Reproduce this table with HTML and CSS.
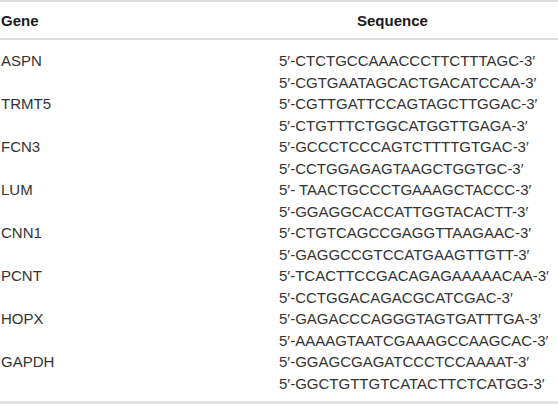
FILE: index.html
```html
<!DOCTYPE html>
<html>
<head>
<meta charset="utf-8">
<link rel="stylesheet" href="styles.css">
</head>
<body>
<div class="table">
  <div class="head">
    <div class="hcell gene-h">Gene</div>
    <div class="hcell seq-h">Sequence</div>
  </div>
  <div class="body">
    <div class="gene">ASPN</div>
    <div class="seq"><div>5′-CTCTGCCAAACCCTTCTTTAGC-3′</div><div>5′-CGTGAATAGCACTGACATCCAA-3′</div></div>
    <div class="gene">TRMT5</div>
    <div class="seq"><div>5′-CGTTGATTCCAGTAGCTTGGAC-3′</div><div>5′-CTGTTTCTGGCATGGTTGAGA-3′</div></div>
    <div class="gene">FCN3</div>
    <div class="seq"><div>5′-GCCCTCCCAGTCTTTTGTGAC-3′</div><div>5′-CCTGGAGAGTAAGCTGGTGC-3′</div></div>
    <div class="gene">LUM</div>
    <div class="seq"><div>5′- TAACTGCCCTGAAAGCTACCC-3′</div><div>5′-GGAGGCACCATTGGTACACTT-3′</div></div>
    <div class="gene">CNN1</div>
    <div class="seq"><div>5′-CTGTCAGCCGAGGTTAAGAAC-3′</div><div>5′-GAGGCCGTCCATGAAGTTGTT-3′</div></div>
    <div class="gene">PCNT</div>
    <div class="seq"><div>5′-TCACTTCCGACAGAGAAAAACAA-3′</div><div>5′-CCTGGACAGACGCATCGAC-3′</div></div>
    <div class="gene">HOPX</div>
    <div class="seq"><div>5′-GAGACCCAGGGTAGTGATTTGA-3′</div><div>5′-AAAAGTAATCGAAAGCCAAGCAC-3′</div></div>
    <div class="gene">GAPDH</div>
    <div class="seq"><div>5′-GGAGCGAGATCCCTCCAAAAT-3′</div><div>5′-GGCTGTTGTCATACTTCTCATGG-3′</div></div>
  </div>
</div>
</body>
</html>
```
FILE: styles.css
```css
html, body {
  margin: 0;
  padding: 0;
  background: #fff;
}
.table {
  width: 558px;
  font-family: "Liberation Sans", Arial, sans-serif;
  font-size: 15px;
  color: #333;
}
.head {
  display: grid;
  grid-template-columns: 279px 279px;
  border-top: 2px solid #dedede;
  border-bottom: 2px solid #dedede;
  height: 36px;
  align-items: center;
}
.hcell {
  font-weight: bold;
  color: #1a1a1a;
}
.gene-h {
  padding-left: 1px;
}
.seq-h {
  padding-left: 78px;
}
.body {
  display: grid;
  grid-template-columns: 279px 279px;
  padding: 10px 0 7px;
  border-bottom: 3px solid #e3e3e3;
  line-height: 21.5px;
}
.gene {
  padding-left: 1px;
}
```
